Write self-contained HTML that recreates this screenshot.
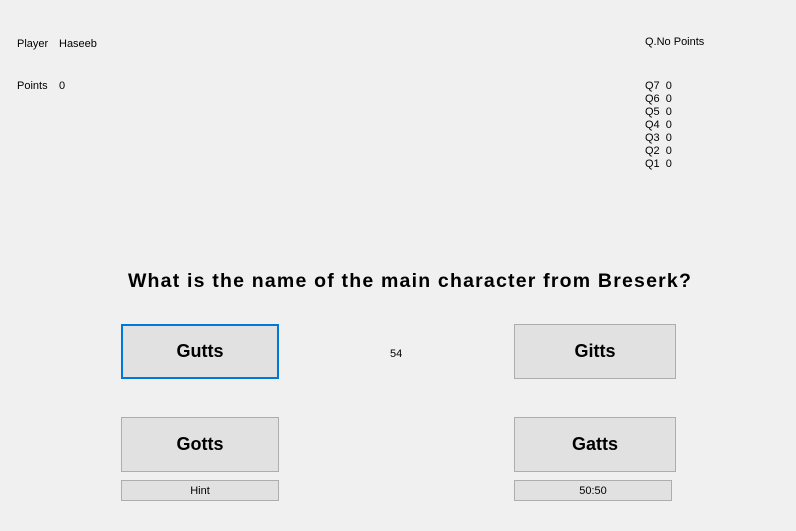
<!DOCTYPE html>
<html><head><style>
body{margin:0;width:796px;height:531px;background:#f0f0f0;font-family:"Liberation Sans",sans-serif;font-size:11px;color:#000;position:relative;overflow:hidden}
.t{position:absolute;white-space:nowrap;line-height:13px}
.b{position:absolute;box-sizing:border-box;background:#e1e1e1;border:1px solid #adadad;display:flex;align-items:center;justify-content:center;font-weight:bold;font-size:18px}
.s{font-weight:normal;font-size:11px}
</style></head><body>
<div class="t" style="left:17px;top:38px">Player</div>
<div class="t" style="left:59px;top:38px">Haseeb</div>
<div class="t" style="left:17px;top:80px">Points</div>
<div class="t" style="left:59px;top:80px">0</div>
<div class="t" style="left:645px;top:36px">Q.No Points</div>
<div class="t" style="left:645px;top:80px">Q7&nbsp;&nbsp;0<br>Q6&nbsp;&nbsp;0<br>Q5&nbsp;&nbsp;0<br>Q4&nbsp;&nbsp;0<br>Q3&nbsp;&nbsp;0<br>Q2&nbsp;&nbsp;0<br>Q1&nbsp;&nbsp;0</div>
<div class="t" style="left:0;width:820px;text-align:center;top:269px;font-size:19.5px;font-weight:bold;line-height:24px;letter-spacing:1.2px">What is the name of the main character from Breserk?</div>
<div class="b" style="left:121px;top:324px;width:158px;height:55px;border:2px solid #0078d7">Gutts</div>
<div class="t" style="left:390px;top:348px">54</div>
<div class="b" style="left:514px;top:324px;width:162px;height:55px">Gitts</div>
<div class="b" style="left:121px;top:417px;width:158px;height:55px">Gotts</div>
<div class="b" style="left:514px;top:417px;width:162px;height:55px">Gatts</div>
<div class="b s" style="left:121px;top:480px;width:158px;height:21px">Hint</div>
<div class="b s" style="left:514px;top:480px;width:158px;height:21px">50:50</div>
</body></html>
